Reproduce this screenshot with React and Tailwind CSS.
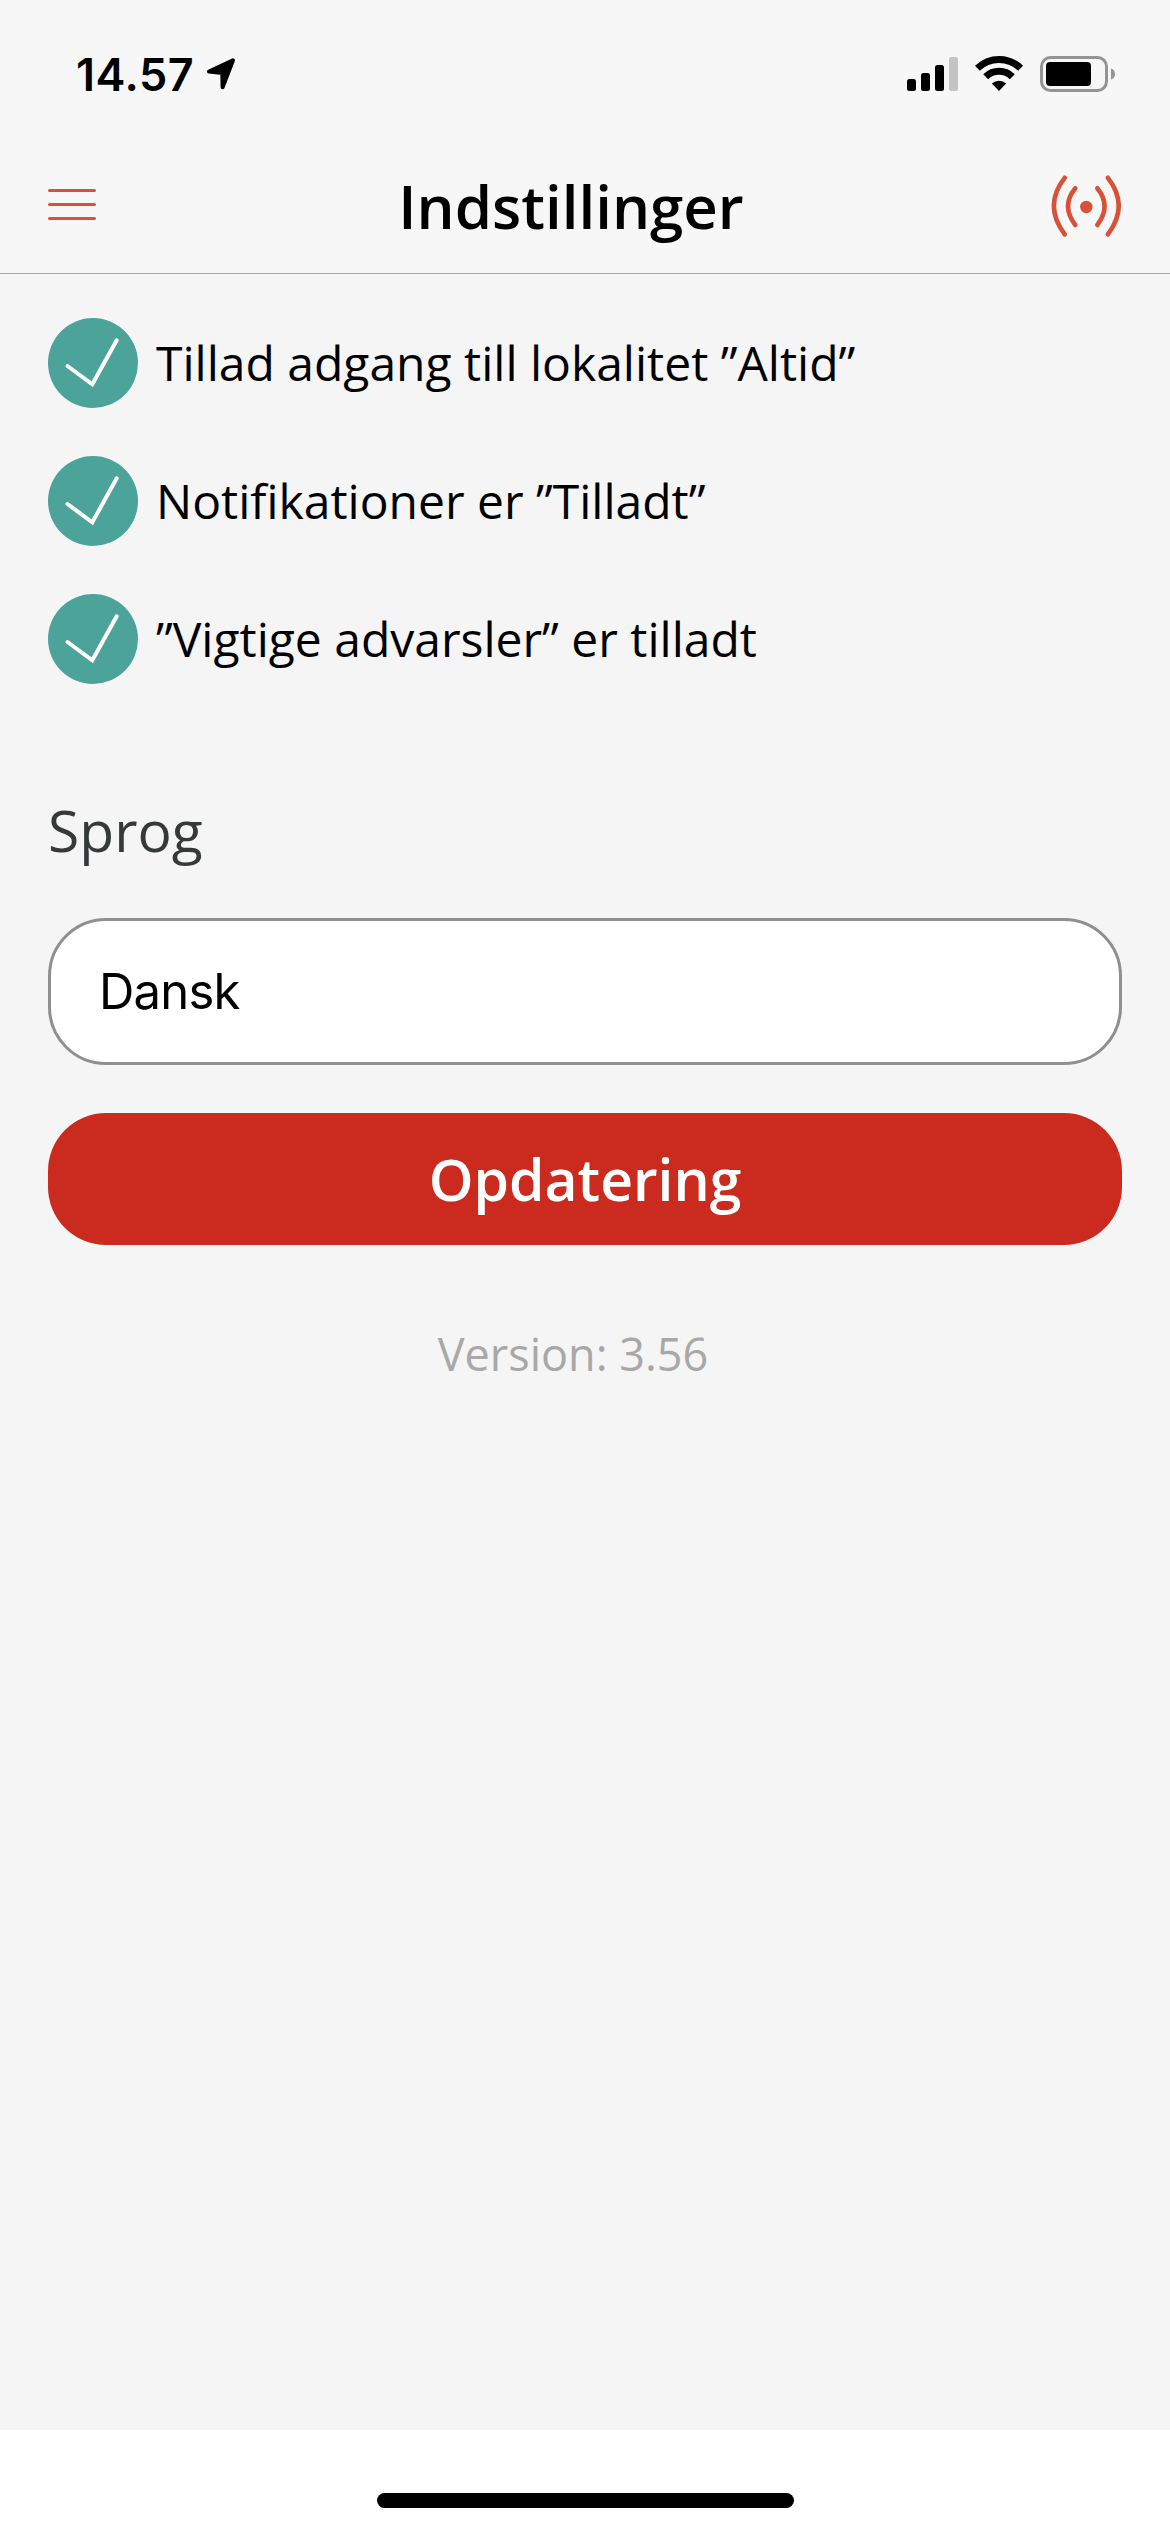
import React from "react";

const checks = [
  "Tillad adgang till lokalitet ”Altid”",
  "Notifikationer er ”Tilladt”",
  "”Vigtige advarsler” er tilladt",
];

const StatusBar = () => (
  <div className="flex h-[150px] items-start justify-between pl-[76px] pr-[55px]">
    <div className="flex items-start pt-[47px]">
      <span className="font-['Inter',sans-serif] text-[45px] leading-[56px] font-semibold tracking-[0.5px]">
        14.57
      </span>
      <svg width="32" height="34" viewBox="0 0 32 34" className="mt-[10px] ml-[11px]">
        <path
          d="M28 3.3 4 14.6 17.3 16 17.6 30.2Z"
          fill="#000"
          stroke="#000"
          strokeWidth="4"
          strokeLinejoin="round"
        />
      </svg>
    </div>

    <div className="flex items-start pt-[55px]">
      <svg width="51" height="36" viewBox="0 0 51 36">
        <rect x="0" y="24" width="9" height="12" rx="2.5" />
        <rect x="14" y="18" width="9" height="18" rx="2.5" />
        <rect x="28" y="10" width="9" height="26" rx="2.5" />
        <rect x="42" y="2" width="9" height="34" rx="2.5" fill="#c4c4c4" />
      </svg>
      <svg width="48" height="36" viewBox="0 0 48 36" className="ml-[17px]">
        <path
          d="M2.4 13.2A31 31 0 0 1 45.6 13.2M10.7 21.8A19 19 0 0 1 37.3 21.8"
          fill="none"
          stroke="#000"
          strokeWidth="7"
        />
        <path d="M24 36 16.8 28.6A10.5 10.5 0 0 1 31.2 28.6Z" />
      </svg>
      <svg width="75" height="36" viewBox="0 0 75 36" className="ml-[17px] mt-[1px]">
        <rect x="1.5" y="1.5" width="65" height="33" rx="9" fill="none" stroke="#949494" strokeWidth="3" />
        <rect x="6" y="6" width="45" height="24" rx="4" />
        <path d="M71 12.5C73.5 13 75 15.5 75 18S73.5 23 71 23.5Z" fill="#949494" />
      </svg>
    </div>
  </div>
);

const Header = () => (
  <header className="h-[274px] border-b border-[#a7a9a8] bg-[#f7f7f7]">
    <StatusBar />
    <div className="flex h-[112px] items-center justify-between pr-[48px] pl-[48px]">
      <svg width="48" height="34" viewBox="0 0 48 34" className="mt-[-4px]">
        <path
          d="M1.5 3.5H46.5M1.5 17.5H46.5M1.5 31.5H46.5"
          stroke="#d85138"
          strokeWidth="3"
          strokeLinecap="round"
        />
      </svg>
      <h1 className="pr-[5px] text-[60px] leading-[80px] font-semibold">Indstillinger</h1>
      <svg width="71" height="62" viewBox="0 0 71 62">
        <g fill="none" stroke="#d85138" strokeWidth="4.6" strokeLinecap="round">
          <path d="M13.7 2.8Q-8 30.5 13.7 59.3" />
          <path d="M24.3 13.3Q9.7 31 24.3 50" />
          <path d="M46.3 13.3Q60.9 31 46.3 50" />
          <path d="M56.9 2.8Q78.6 30.5 56.9 59.3" />
        </g>
        <circle cx="35.3" cy="32" r="6.2" fill="#d85138" />
      </svg>
    </div>
  </header>
);

const CheckRow = ({ label }) => (
  <li className="flex h-[90px] items-center">
    <svg width="90" height="90" viewBox="0 0 90 90">
      <circle cx="45" cy="45" r="45" fill="#4ba39a" />
      <path
        d="M19.5 48 44.3 66.3 68.7 22.3"
        fill="none"
        stroke="#fff"
        strokeWidth="4"
        strokeLinecap="round"
      />
    </svg>
    <span className="ml-[18px] text-[48px] leading-[64px] whitespace-nowrap">{label}</span>
  </li>
);

const App = () => {
  return (
    <div className="flex h-[2532px] w-[1170px] flex-col overflow-hidden bg-[#f5f5f5] font-['Open_Sans',sans-serif] text-black">
      <Header />

      <main className="flex flex-1 flex-col px-[48px] pt-[44px]">
        <ul className="flex flex-col gap-[48px]">
          {checks.map((label) => (
            <CheckRow key={label} label={label} />
          ))}
        </ul>

        <h2 className="mt-[106px] text-[57px] leading-[80px] text-[#36393a]">Sprog</h2>

        <div className="mt-[48px] flex h-[147px] items-center rounded-[58px] border-[3px] border-[#8f8f8f] bg-white pl-[48px] font-['Inter',sans-serif] text-[49px] tracking-[-0.8px]">
          Dansk
        </div>

        <button className="mt-[48px] h-[132px] rounded-[58px] bg-[#ca2b1e] text-[57px] leading-[80px] font-semibold text-white">
          Opdatering
        </button>

        <p className="mt-[79px] pr-[24px] text-center text-[45px] leading-[60px] text-[#a8a8a8]">
          Version: 3.56
        </p>
      </main>

      <footer className="flex h-[102px] justify-center bg-white pt-[63px]">
        <div className="h-[15px] w-[417px] rounded-full bg-black" />
      </footer>
    </div>
  );
};

export default App;
